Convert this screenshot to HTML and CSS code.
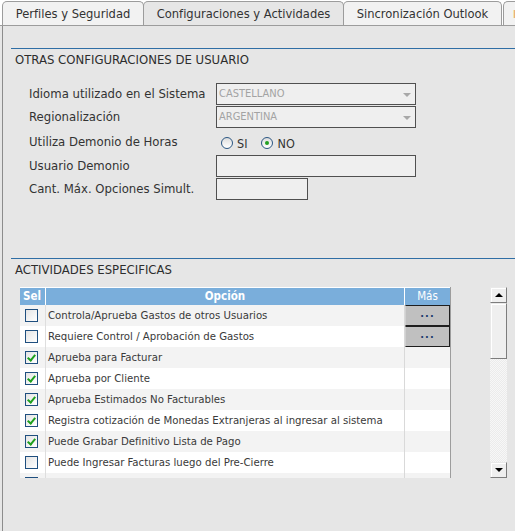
FILE: index.html
```html
<!DOCTYPE html>
<html lang="es">
<head>
<meta charset="utf-8">
<title>Configuraciones y Actividades</title>
<link rel="stylesheet" href="styles.css">
</head>
<body>
<div class="tabs">
  <div class="tab t1">Perfiles y Seguridad</div>
  <div class="tab t2 active">Configuraciones y Actividades</div>
  <div class="tab t3">Sincronización Outlook</div>
  <div class="tab t4"><span class="orange">I</span></div>
</div>
<div class="panel">
  <section class="sec">
    <h2 class="sec-title">OTRAS CONFIGURACIONES DE USUARIO</h2>
    <div class="form">
      <div class="lbl">Idioma utilizado en el Sistema</div>
      <div class="select">CASTELLANO<span class="caret"></span></div>
      <div class="lbl">Regionalización</div>
      <div class="select">ARGENTINA<span class="caret"></span></div>
      <div class="lbl">Utiliza Demonio de Horas</div>
      <div class="radios">
        <span class="radio"></span><span class="rtxt">SI</span>
        <span class="radio on"></span><span class="rtxt">NO</span>
      </div>
      <div class="lbl">Usuario Demonio</div>
      <div class="input"></div>
      <div class="lbl">Cant. Máx. Opciones Simult.</div>
      <div class="input small"></div>
    </div>
  </section>
  <section class="sec sec2">
    <h2 class="sec-title">ACTIVIDADES ESPECIFICAS</h2>
    <div class="grid-wrap">
      <div class="table">
        <div class="thead">
          <div class="th c-sel">Sel</div>
          <div class="th c-opt">Opción</div>
          <div class="th c-mas">Más</div>
        </div>
        <div class="tbody">
          <div class="tr"><div class="td c-sel"><span class="cb"></span></div><div class="td c-opt">Controla/Aprueba Gastos de otros Usuarios</div><div class="td c-mas"><span class="btn">...</span></div></div>
          <div class="tr"><div class="td c-sel"><span class="cb"></span></div><div class="td c-opt">Requiere Control / Aprobación de Gastos</div><div class="td c-mas"><span class="btn">...</span></div></div>
          <div class="tr"><div class="td c-sel"><span class="cb on"></span></div><div class="td c-opt">Aprueba para Facturar</div><div class="td c-mas"></div></div>
          <div class="tr"><div class="td c-sel"><span class="cb on"></span></div><div class="td c-opt">Aprueba por Cliente</div><div class="td c-mas"></div></div>
          <div class="tr"><div class="td c-sel"><span class="cb on"></span></div><div class="td c-opt">Aprueba Estimados No Facturables</div><div class="td c-mas"></div></div>
          <div class="tr"><div class="td c-sel"><span class="cb on"></span></div><div class="td c-opt">Registra cotización de Monedas Extranjeras al ingresar al sistema</div><div class="td c-mas"></div></div>
          <div class="tr"><div class="td c-sel"><span class="cb on"></span></div><div class="td c-opt">Puede Grabar Definitivo Lista de Pago</div><div class="td c-mas"></div></div>
          <div class="tr"><div class="td c-sel"><span class="cb"></span></div><div class="td c-opt">Puede Ingresar Facturas luego del Pre-Cierre</div><div class="td c-mas"></div></div>
          <div class="tr"><div class="td c-sel"><span class="cb"></span></div><div class="td c-opt"></div><div class="td c-mas"></div></div>
        </div>
      </div>
      <div class="scrollbar">
        <div class="sb-btn"><span class="tri up"></span></div>
        <div class="sb-thumb"></div>
        <div class="sb-track"></div>
        <div class="sb-btn"><span class="tri down"></span></div>
      </div>
    </div>
  </section>
</div>
</body>
</html>
```

FILE: styles.css
```css
* { box-sizing: border-box; }
html, body { margin: 0; padding: 0; }
body {
  width: 515px;
  height: 531px;
  overflow: hidden;
  background: #e6e6e6;
  font-family: "DejaVu Sans Condensed", "DejaVu Sans", sans-serif;
  font-stretch: condensed;
  color: #333;
}
.tabs {
  display: flex;
  align-items: flex-end;
  height: 26px;
  padding: 1px 0 0 2px;
  background: #fff;
  border-bottom: 1px solid #9c9c9c;
  white-space: nowrap;
  overflow: hidden;
}
.tab {
  flex: none;
  height: 24px;
  border: 1px solid #9c9c9c;
  border-bottom: none;
  border-radius: 5px 5px 0 0;
  background: #f2f2f2;
  font-size: 12.8px;
  line-height: 23px;
  text-align: center;
  color: #333;
}
.t1 { width: 142px; }
.t2 { width: 201px; margin-left: -1px; }
.t3 { width: 159px; margin-left: -1px; }
.t4 { width: 13px; margin-left: 1px; text-align: left; padding-left: 9px; border-right: none; border-radius: 5px 0 0 0; }
.orange { color: #e8a33c; font-size: 11px; }
.tab.active {
  background: #e6e6e6;
  height: 25px;
  margin-bottom: -1px;
}
.panel {
  margin-left: 2px;
  border-left: 1px solid #8c8c8c;
  height: 505px;
  padding: 22px 0 0 8px;
}
.sec-title {
  margin: 0;
  border-top: 1px solid #2f6ea5;
  padding: 3px 0 0 4px;
  font-size: 13px;
  line-height: 16px;
  font-weight: normal;
  color: #2d2d2d;
}
.form {
  display: grid;
  grid-template-columns: 187px 1fr;
  grid-template-rows: 22px 22px 25px 22px 22px;
  row-gap: 1px;
  margin-top: 15px;
  padding-left: 18px;
}
.lbl {
  font-size: 13px;
  line-height: 16px;
  align-self: center;
  color: #333;
}
.select, .input {
  position: relative;
  width: 200px;
  height: 22px;
  border: 1px solid #505050;
  background: #efefef;
}
.input.small { width: 92px; }
.select {
  font-size: 11px;
  line-height: 20px;
  padding-left: 2px;
  color: #a3a3a3;
}
.caret {
  position: absolute;
  right: 4px;
  top: 9px;
  width: 0;
  height: 0;
  border-left: 4px solid transparent;
  border-right: 4px solid transparent;
  border-top: 4px solid #a8a8a8;
}
.radios {
  display: flex;
  align-items: center;
  padding: 3px 0 0 5px;
  font-size: 12.5px;
}
.radio {
  width: 12px;
  height: 12px;
  border: 1px solid #2b5783;
  border-radius: 50%;
  background: linear-gradient(#ddd, #fff);
  position: relative;
}
.radio.on::after {
  content: "";
  position: absolute;
  left: 3px;
  top: 3px;
  width: 4px;
  height: 4px;
  border-radius: 50%;
  background: #22a022;
}
.rtxt { margin-left: 4px; margin-right: 14px; }
.sec2 { margin-top: 58px; }
.sec2 .sec-title { padding-top: 3px; }
.grid-wrap {
  display: flex;
  align-items: flex-start;
  margin-top: 9px;
  padding-left: 9px;
}
.table {
  width: 431px;
  height: 191px;
  overflow: hidden;
  border-right: 1px solid #9d9d9d;
  background: #fff;
}
.thead {
  display: grid;
  grid-template-columns: 26px 359px 45px;
  height: 18px;
  border-top: 1px solid #fff;
  background: #7aaedb;
}
.th {
  color: #fff;
  font-size: 11.5px;
  font-weight: bold;
  line-height: 17px;
  text-align: center;
  border-right: 1px solid #fff;
}
.th.c-mas { border-right: none; font-weight: normal; }
.th.c-sel { text-align: left; padding-left: 3px; }
.tbody .tr {
  display: grid;
  grid-template-columns: 26px 359px 45px;
  height: 21px;
}
.tbody .tr:nth-child(odd) { background: #f3f3f3; }
.tbody .tr:nth-child(even) { background: #fff; }
.td {
  font-size: 11.3px;
  line-height: 21px;
  white-space: nowrap;
  overflow: hidden;
}
.td.c-sel { border-right: 1px solid #dedede; display: flex; align-items: center; padding-left: 5px; }
.td.c-opt { border-right: 1px solid #d9d9d9; padding-left: 2px; color: #3a3a3a; }
.cb {
  width: 13px;
  height: 13px;
  border: 1px solid #1f4f7f;
  background: linear-gradient(135deg, #e4e4e4, #fff);
  position: relative;
}
.cb.on::after {
  content: "";
  position: absolute;
  left: 3px;
  top: 1px;
  width: 3px;
  height: 6px;
  border-right: 2px solid #1ea01e;
  border-bottom: 2px solid #1ea01e;
  transform: rotate(40deg);
}
.btn {
  display: block;
  height: 21px;
  background: #c0c0c0;
  border: 1px solid #1e1e1e;
  border-left-color: #d0d0d0;
  text-align: center;
  color: #1d3c6c;
  font-weight: bold;
  font-size: 11px;
  line-height: 16px;
  letter-spacing: 1px;
}
.scrollbar {
  margin-left: 39px;
  width: 17px;
  height: 191px;
  display: flex;
  flex-direction: column;
}
.sb-btn, .sb-thumb {
  background: #efefef;
  border: 1px solid #e9e9e9;
  border-right-color: #7d7d7d;
  border-bottom-color: #7d7d7d;
  box-shadow: inset 1px 1px 0 #fff;
}
.sb-btn {
  height: 16px;
  display: flex;
  align-items: center;
  justify-content: center;
}
.sb-thumb { height: 56px; }
.sb-track {
  flex: 1;
  background: repeating-conic-gradient(#f7f7f7 0 25%, #ebebeb 0 50%) 0 0 / 2px 2px;
}
.tri {
  width: 0;
  height: 0;
  border-left: 4px solid transparent;
  border-right: 4px solid transparent;
}
.tri.up { border-bottom: 4px solid #000; }
.tri.down { border-top: 4px solid #000; }
```
